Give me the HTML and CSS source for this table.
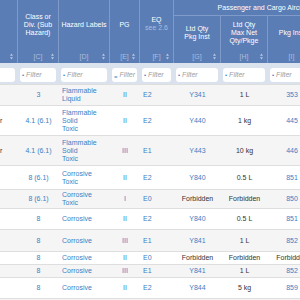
FILE: index.html
```html
<!DOCTYPE html>
<html lang="en">
<head>
<meta charset="utf-8">
<title>DGR List</title>
<link rel="stylesheet" href="styles.css">
</head>
<body>
<table class="dgr">
  <colgroup>
    <col class="cb"><col class="cc"><col class="cd"><col class="ce"><col class="cf">
    <col class="cg"><col class="ch"><col class="ci"><col class="cj">
  </colgroup>
  <thead>
    <tr class="hr1">
      <th rowspan="2" class="hc"><div class="lbl tall"></div><div class="ft"><span></span><span class="code"></span><svg class="sort" viewBox="0 0 4 8"><path d="M2 0L4 3H0Z M2 8L4 5H0Z"/></svg></div></th>
      <th rowspan="2" class="hc"><div class="lbl tall"><span>Class or<br>Div. (Sub<br>Hazard)</span></div><div class="ft"><span></span><span class="code">[C]</span><svg class="sort" viewBox="0 0 4 8"><path d="M2 0L4 3H0Z M2 8L4 5H0Z"/></svg></div></th>
      <th rowspan="2" class="hc"><div class="lbl tall"><span>Hazard Labels</span></div><div class="ft"><span></span><span class="code">[D]</span><svg class="sort" viewBox="0 0 4 8"><path d="M2 0L4 3H0Z M2 8L4 5H0Z"/></svg></div></th>
      <th rowspan="2" class="hc"><div class="lbl tall"><span>PG</span></div><div class="ft"><span></span><span class="code">[E]</span><svg class="sort" viewBox="0 0 4 8"><path d="M2 0L4 3H0Z M2 8L4 5H0Z"/></svg></div></th>
      <th rowspan="2" class="hc"><div class="lbl tall eqlbl"><span>EQ<br><span class="note">see 2.6</span></span></div><div class="ft"><span></span><span class="code">[F]</span><svg class="sort" viewBox="0 0 4 8"><path d="M2 0L4 3H0Z M2 8L4 5H0Z"/></svg></div></th>
      <th colspan="4" class="grp">Passenger and Cargo Aircraft</th>
    </tr>
    <tr class="hr2">
      <th class="hc"><div class="lbl sub"><span>Ltd Qty<br>Pkg Inst</span></div><div class="ft"><span></span><span class="code">[G]</span><svg class="sort" viewBox="0 0 4 8"><path d="M2 0L4 3H0Z M2 8L4 5H0Z"/></svg></div></th>
      <th class="hc"><div class="lbl sub"><span>Ltd Qty<br>Max Net<br>Qty/Pkge</span></div><div class="ft"><span></span><span class="code">[H]</span><svg class="sort" viewBox="0 0 4 8"><path d="M2 0L4 3H0Z M2 8L4 5H0Z"/></svg></div></th>
      <th class="hc"><div class="lbl sub"><span>Pkg Inst</span></div><div class="ft"><span></span><span class="code">[I]</span><svg class="sort" viewBox="0 0 4 8"><path d="M2 0L4 3H0Z M2 8L4 5H0Z"/></svg></div></th>
      <th class="hc"><div class="lbl sub"><span>Max Net<br>Qty/Pkg</span></div><div class="ft"><span></span><span class="code">[J]</span><svg class="sort" viewBox="0 0 4 8"><path d="M2 0L4 3H0Z M2 8L4 5H0Z"/></svg></div></th>
    </tr>
    <tr class="filters">
      <td class="fb"><div class="flt"></div></td>
      <td><div class="flt"><span class="dot">&bull;</span><span class="ph">Filter</span></div></td>
      <td><div class="flt"><span class="dot">&bull;</span><span class="ph">Filter</span></div></td>
      <td><div class="flt"><span class="dot eqi">=</span><span class="ph">Filter</span></div></td>
      <td><div class="flt"><span class="dot">&bull;</span><span class="ph">Filter</span></div></td>
      <td><div class="flt"><span class="dot">&bull;</span><span class="ph">Filter</span></div></td>
      <td><div class="flt"><span class="dot">&bull;</span><span class="ph">Filter</span></div></td>
      <td><div class="flt"><span class="dot">&bull;</span><span class="ph">Filter</span></div></td>
      <td><div class="flt"><span class="dot">&bull;</span><span class="ph">Filter</span></div></td>
    </tr>
  </thead>
  <tbody>
    <tr class="h21"><td class="nm"></td><td class="lk">3</td><td class="lk lft">Flammable<br>Liquid</td><td class="lk">II</td><td class="lk lft">E2</td><td class="lk">Y341</td><td>1 L</td><td class="lk">353</td><td>5 L</td></tr>
    <tr class="h30"><td class="nm">r</td><td class="lk">4.1 (6.1)</td><td class="lk lft">Flammable<br>Solid<br>Toxic</td><td class="lk">II</td><td class="lk lft">E2</td><td class="lk">Y440</td><td>1 kg</td><td class="lk">445</td><td>15 kg</td></tr>
    <tr class="h30"><td class="nm">r</td><td class="lk">4.1 (6.1)</td><td class="lk lft">Flammable<br>Solid<br>Toxic</td><td class="lk">III</td><td class="lk lft">E1</td><td class="lk">Y443</td><td>10 kg</td><td class="lk">446</td><td>25 kg</td></tr>
    <tr class="h24"><td class="nm"></td><td class="lk">8 (6.1)</td><td class="lk lft">Corrosive<br>Toxic</td><td class="lk">II</td><td class="lk lft">E2</td><td class="lk">Y840</td><td>0.5 L</td><td class="lk">851</td><td>1 L</td></tr>
    <tr class="h19"><td class="nm"></td><td class="lk">8 (6.1)</td><td class="lk lft">Corrosive<br>Toxic</td><td class="lk">I</td><td class="lk lft">E0</td><td>Forbidden</td><td>Forbidden</td><td class="lk">850</td><td>0.5 L</td></tr>
    <tr class="h21"><td class="nm"></td><td class="lk">8</td><td class="lk lft">Corrosive</td><td class="lk">II</td><td class="lk lft">E2</td><td class="lk">Y840</td><td>0.5 L</td><td class="lk">851</td><td>1 L</td></tr>
    <tr class="h22"><td class="nm"></td><td class="lk">8</td><td class="lk lft">Corrosive</td><td class="lk">III</td><td class="lk lft">E1</td><td class="lk">Y841</td><td>1 L</td><td class="lk">852</td><td>5 L</td></tr>
    <tr class="h13"><td class="nm"></td><td class="lk">8</td><td class="lk lft">Corrosive</td><td class="lk">II</td><td class="lk lft">E0</td><td>Forbidden</td><td>Forbidden</td><td>Forbidden</td><td>Forbidden</td></tr>
    <tr class="h13"><td class="nm"></td><td class="lk">8</td><td class="lk lft">Corrosive</td><td class="lk">III</td><td class="lk lft">E1</td><td class="lk">Y841</td><td>1 L</td><td class="lk">852</td><td>5 L</td></tr>
    <tr class="h21"><td class="nm"></td><td class="lk">8</td><td class="lk lft">Corrosive</td><td class="lk">II</td><td class="lk lft">E2</td><td class="lk">Y844</td><td>5 kg</td><td class="lk">859</td><td>25 kg</td></tr>
    <tr class="h13"><td class="nm"></td><td class="lk">8</td><td class="lk lft">Corrosive</td><td class="lk">II</td><td class="lk lft">E2</td><td class="lk">Y840</td><td>0.5 L</td><td class="lk">851</td><td>1 L</td></tr>
  </tbody>
</table>
</body>
</html>
```
FILE: styles.css
```css
html, body {
  margin: 0;
  padding: 0;
  overflow: hidden;
  background: #fff;
}
body {
  width: 300px;
  height: 300px;
  font-family: "Liberation Sans", Arial, sans-serif;
  font-size: 7px;
  line-height: 8px;
  color: #333;
}
.dgr {
  border-collapse: separate;
  border-spacing: 0;
  table-layout: fixed;
  width: 354px;
}
.cb { width: 18px; }
.cc { width: 41px; }
.cd { width: 51px; }
.ce { width: 30px; }
.cf { width: 34px; }
.cg { width: 47px; }
.ch { width: 47px; }
.ci { width: 48px; }
.cj { width: 38px; }

thead th {
  background: #5b7db5;
  color: #fff;
  font-weight: normal;
  padding: 0;
  vertical-align: top;
  border-right: 1px solid #7f9bc9;
}
.grp {
  height: 15px;
  border-bottom: 1px solid #7f9bc9;
  text-align: center;
  vertical-align: middle;
  white-space: nowrap;
}
.lbl {
  display: flex;
  align-items: center;
  justify-content: center;
  text-align: center;
}
.lbl.tall { height: 50px; }
.lbl.sub { height: 34px; }
.eqlbl { padding-bottom: 2px; box-sizing: border-box; }
.note { color: #a9bddf; }
.ft {
  display: grid;
  grid-template-columns: 1fr auto 1fr;
  align-items: center;
  height: 13px;
}
.code { color: #a9bddf; }
.sort {
  justify-self: end;
  width: 3px;
  height: 7px;
  margin-right: 4px;
  fill: #b8c8e2;
}

.filters td {
  background: #dae2ed;
  padding: 5px 3px 2px 2px;
  height: 14px;
}
.filters td.fb { padding-left: 0; }
.flt {
  height: 14px;
  background: #fff;
  border-radius: 3px;
  display: flex;
  align-items: center;
  gap: 2px;
  padding-left: 2px;
  color: #a0a0a0;
  font-style: italic;
  overflow: hidden;
  white-space: nowrap;
}
.fb .flt { border-radius: 0 3px 3px 0; }
.dot {
  color: #3a80c4;
  font-style: normal;
  font-size: 6px;
}
.eqi { position: relative; top: 2px; }

tbody td {
  border-top: 1px solid #dedede;
  padding: 0 3px;
  text-align: center;
  vertical-align: middle;
  white-space: nowrap;
  overflow: hidden;
}
tbody tr:nth-child(odd) td { background: #f5f5f5; }
tbody td.nm { text-align: left; padding-left: 0; }
.lk { color: #3a80c4; }
tbody td.lft { text-align: left; }
.h13 { height: 13px; }
.h19 { height: 19px; }
.h21 { height: 21px; }
.h22 { height: 22px; }
.h24 { height: 24px; }
.h30 { height: 30px; }
```
